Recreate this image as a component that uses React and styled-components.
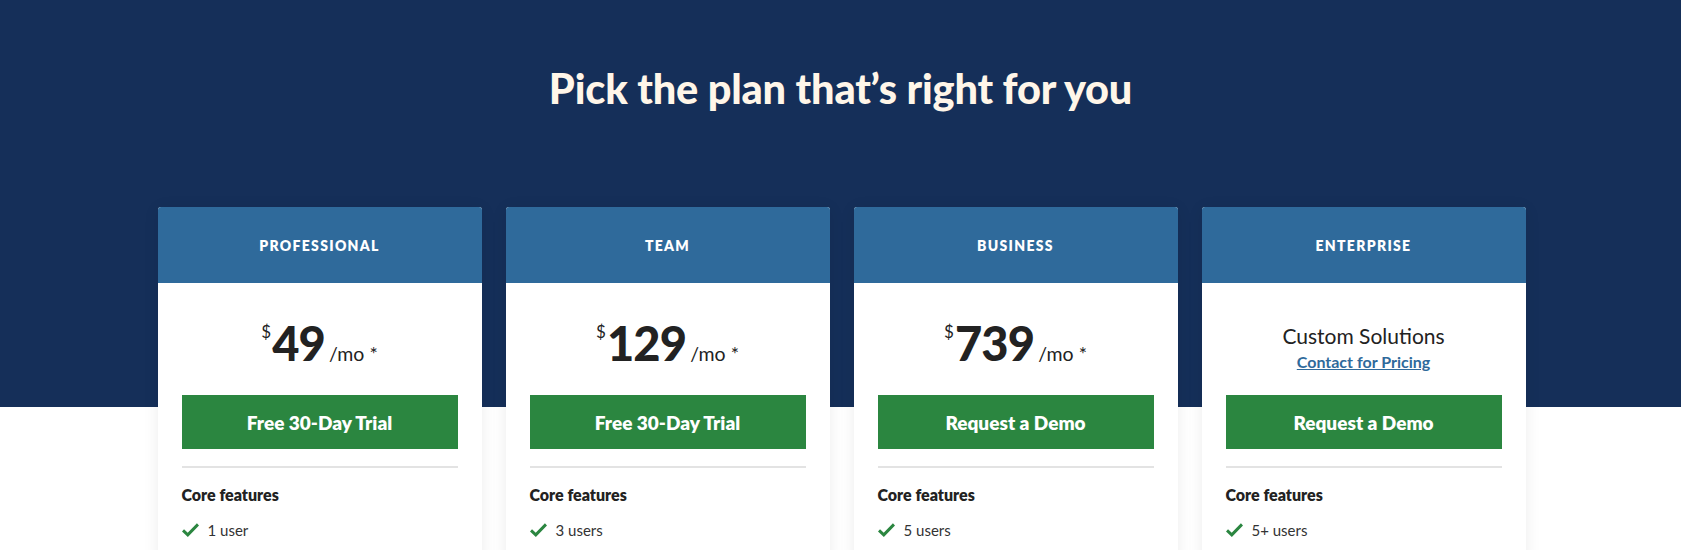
import React from "react";
import styled, { createGlobalStyle } from "styled-components";

const Global = createGlobalStyle`
  html, body { margin: 0; padding: 0; background: #ffffff; }
  body { font-family: "Lato", "Noto Sans", sans-serif; color: #222222; }
  * { box-sizing: border-box; }
`;

const Hero = styled.section`
  background: linear-gradient(to bottom, #152f59 0, #152f59 407px, #ffffff 407px);
  padding: 60px 0 0;
  min-height: 550px;
`;

const Title = styled.h1`
  margin: 0;
  text-align: center;
  color: #fff6e9;
  font-size: 41.5px;
  line-height: 56px;
  font-weight: 900;
  letter-spacing: -0.2px;
`;

const Grid = styled.div`
  width: 1368px;
  margin: 91px auto 0;
  display: grid;
  grid-template-columns: repeat(4, 324px);
  gap: 24px;
  transform: translateX(1px);
`;

const Card = styled.div`
  background: #ffffff;
  border-radius: 3px 3px 0 0;
  box-shadow: 0 2px 16px rgba(0, 0, 0, 0.08);
  overflow: hidden;
`;

const CardHeader = styled.div`
  height: 76px;
  background: #2f6a9b;
  display: flex;
  align-items: center;
  justify-content: center;
  color: #ffffff;
  font-size: 14px;
  font-weight: 800;
  letter-spacing: 1.3px;
  text-transform: uppercase;
`;

const CardBody = styled.div`
  padding: 0 24px 24px;
`;

const PriceArea = styled.div`
  height: 112px;
  padding-top: 7px;
  display: flex;
  flex-direction: column;
  align-items: center;
  justify-content: center;
`;

const Price = styled.div`
  display: flex;
  align-items: baseline;
  color: #222222;
`;

const Currency = styled.span`
  font-size: 17px;
  align-self: flex-start;
  margin-top: 4px;
  margin-right: 1px;
`;

const Amount = styled.span`
  font-size: 47px;
  font-weight: 900;
  line-height: 52px;
  letter-spacing: -0.8px;
`;

const Period = styled.span`
  font-size: 19.5px;
  margin-left: 4px;
`;

const Custom = styled.div`
  margin-top: 10px;
  font-size: 21px;
  line-height: 28px;
  color: #222222;
`;

const ContactLink = styled.a`
  font-size: 16px;
  line-height: 24px;
  font-weight: 700;
  color: #2f6a9b;
  text-decoration: underline;
`;

const Button = styled.a`
  display: flex;
  align-items: center;
  justify-content: center;
  height: 54px;
  background: #2b8640;
  color: #ffffff;
  font-size: 19px;
  font-weight: 800;
  text-decoration: none;
`;

const Divider = styled.hr`
  margin: 17px 0 0;
  border: 0;
  border-top: 2px solid #e3e3e3;
`;

const SectionTitle = styled.div`
  margin-top: 16px;
  font-size: 16px;
  line-height: 22px;
  font-weight: 800;
  color: #222222;
`;

const Feature = styled.div`
  margin-top: 14px;
  display: flex;
  align-items: center;
  gap: 9px;
  font-size: 15px;
  line-height: 20px;
  color: #333333;
`;

const Check = () => (
  <svg width="17" height="14" viewBox="0 0 17 14" aria-hidden="true">
    <path d="M1 7.4 L5.8 11.8 L16 1.4" fill="none" stroke="#2b8640" strokeWidth="3" strokeLinejoin="miter" />
  </svg>
);

const plans = [
  { name: "Professional", price: "49", cta: "Free 30-Day Trial", users: "1 user" },
  { name: "Team", price: "129", cta: "Free 30-Day Trial", users: "3 users" },
  { name: "Business", price: "739", cta: "Request a Demo", users: "5 users" },
  { name: "Enterprise", price: null, cta: "Request a Demo", users: "5+ users" },
];

export default function App() {
  return (
    <>
      <Global />
      <Hero>
        <Title>Pick the plan that’s right for you</Title>
        <Grid>
          {plans.map((p) => (
            <Card key={p.name}>
              <CardHeader>{p.name}</CardHeader>
              <CardBody>
                <PriceArea>
                  {p.price ? (
                    <Price>
                      <Currency>$</Currency>
                      <Amount>{p.price}</Amount>
                      <Period>/mo *</Period>
                    </Price>
                  ) : (
                    <>
                      <Custom>Custom Solutions</Custom>
                      <ContactLink href="#">Contact for Pricing</ContactLink>
                    </>
                  )}
                </PriceArea>
                <Button href="#">{p.cta}</Button>
                <Divider />
                <SectionTitle>Core features</SectionTitle>
                <Feature>
                  <Check />
                  {p.users}
                </Feature>
              </CardBody>
            </Card>
          ))}
        </Grid>
      </Hero>
    </>
  );
}
